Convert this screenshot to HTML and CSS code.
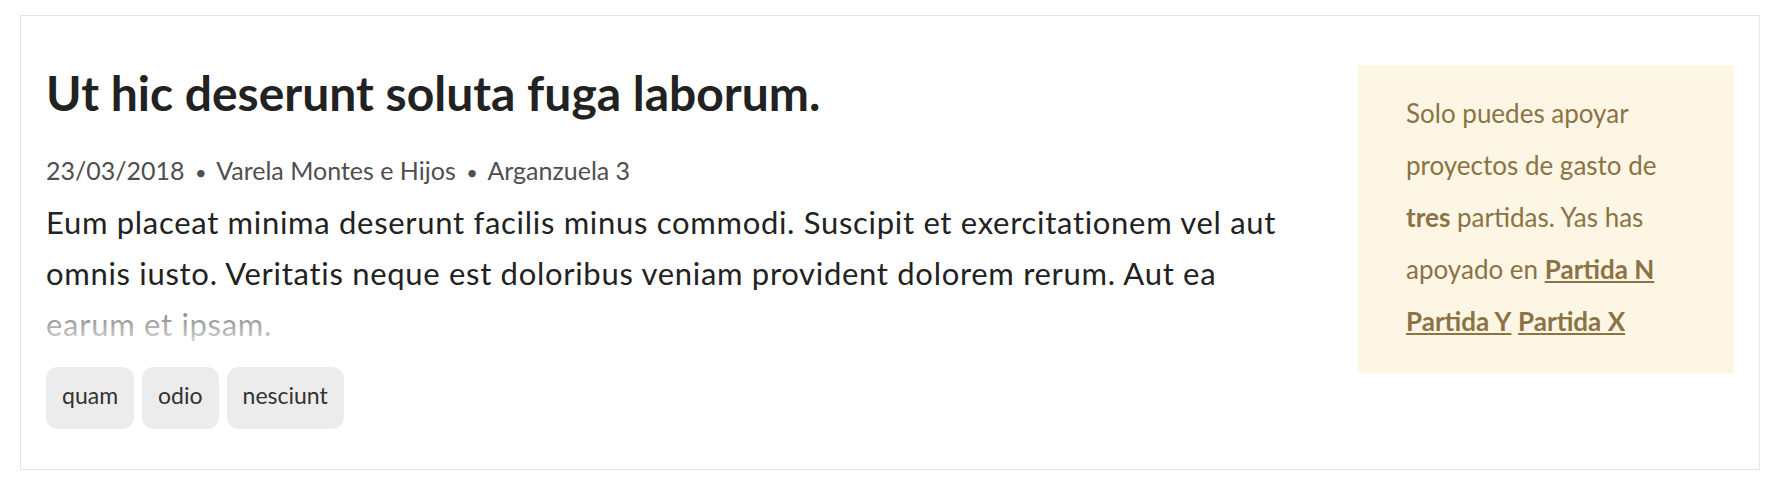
FILE: index.html
```html
<!DOCTYPE html>
<html lang="es">
<head>
  <meta charset="UTF-8">
  <meta name="viewport" content="width=device-width, initial-scale=1.0">
  <title>Proyecto de gasto</title>
  <link rel="stylesheet" href="styles.css">
</head>
<body>

  <div class="budget-card">
    <div class="budget-main">
      <h3 class="budget-title">Ut hic deserunt soluta fuga laborum.</h3>

      <p class="budget-info">
        <span>23/03/2018</span>
        <span class="bullet">&bull;</span>
        <span>Varela Montes e Hijos</span>
        <span class="bullet">&bull;</span>
        <span>Arganzuela 3</span>
      </p>

      <div class="budget-description">
        <p>Eum placeat minima deserunt facilis minus commodi. Suscipit et exercitationem vel aut omnis iusto. Veritatis neque est doloribus veniam provident dolorem rerum. Aut ea earum et ipsam.</p>
      </div>

      <ul class="tags">
        <li><a href="#">quam</a></li>
        <li><a href="#">odio</a></li>
        <li><a href="#">nesciunt</a></li>
      </ul>
    </div>

    <aside class="support-callout">
      <p>Solo puedes apoyar proyectos de gasto de <strong>tres</strong> partidas. Yas has apoyado en <a href="#">Partida N</a> <a href="#">Partida Y</a> <a href="#">Partida X</a></p>
    </aside>
  </div>

</body>
</html>
```

FILE: styles.css
```css
body {
  margin: 15px 24px 24px 20px;
  font-family: Lato, 'Open Sans', sans-serif;
  color: #222;
  background: #fff;
}

.budget-card {
  display: flex;
  align-items: flex-start;
  gap: 64px;
  padding: 49px 25px 40px 25px;
  border: 1px solid #e3e3e8;
  box-shadow: 1px 2px 3px rgba(0, 0, 0, 0.18);
}

.budget-main {
  flex: 1;
  min-width: 0;
}

.budget-title {
  margin: 0;
  font-size: 48px;
  line-height: 56px;
  font-weight: 700;
  color: #222;
}

.budget-info {
  margin: 31px 0 0;
  font-size: 25px;
  line-height: 36px;
  color: #4f4f4f;
}

.budget-info .bullet {
  margin: 0 4px;
  font-size: 20px;
}

/* description is cut after three lines, last one fades out */
.budget-description {
  position: relative;
  max-height: 153px;
  overflow: hidden;
  margin-top: 7px;
}

.budget-description p {
  margin: 0;
  font-size: 31px;
  line-height: 51px;
  letter-spacing: 0.7px;
}

.budget-description::after {
  content: '';
  position: absolute;
  left: 0;
  right: 0;
  bottom: 0;
  height: 51px;
  background: linear-gradient(rgba(255, 255, 255, 0.3), rgba(255, 255, 255, 0.9));
}

.tags {
  display: flex;
  gap: 8px;
  margin: 17px 0 0;
  padding: 0;
  list-style: none;
}

.tags a {
  display: block;
  padding: 13px 16px 19px;
  font-size: 23px;
  line-height: 30px;
  color: #333;
  text-decoration: none;
  background: #ececec;
  border-radius: 12px;
}

.support-callout {
  width: 376px;
  box-sizing: border-box;
  padding: 22px 48px 26px;
  background: #fdf6e4;
  color: #8b7345;
}

.support-callout p {
  margin: 0;
  font-size: 26px;
  line-height: 52px;
}

.support-callout a {
  color: #8b7345;
  font-weight: 700;
}
```
